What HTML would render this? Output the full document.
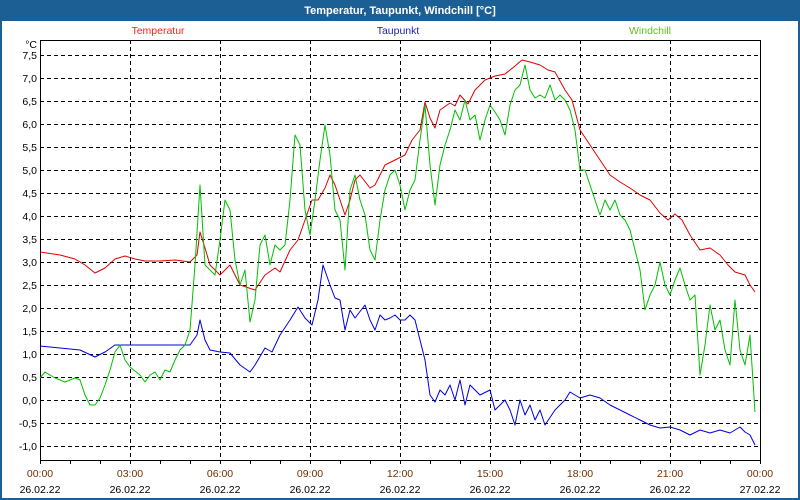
<!DOCTYPE html><html><head><meta charset="utf-8"><style>
html,body{margin:0;padding:0;width:800px;height:500px;overflow:hidden;background:#fff}
svg text{font-family:"Liberation Sans",sans-serif;font-size:10.5px}
</style></head><body>
<svg width="800" height="500" xmlns="http://www.w3.org/2000/svg">
<rect x="0" y="0" width="800" height="500" fill="#1c5f94"/>
<rect x="2" y="21" width="796" height="477" fill="#fff"/>
<text x="400" y="14" fill="#fff" font-weight="bold" text-anchor="middle" style="font-size:11px">Temperatur, Taupunkt, Windchill [°C]</text>
<text x="158" y="34" fill="#ff2020" text-anchor="middle">Temperatur</text>
<text x="398" y="34" fill="#2020c0" text-anchor="middle">Taupunkt</text>
<text x="650" y="34" fill="#60c020" text-anchor="middle">Windchill</text>
<g stroke="#000" stroke-width="1" stroke-dasharray="4,3" shape-rendering="crispEdges" fill="none">
<path d="M40 55.5H760M40 78.5H760M40 101.5H760M40 124.5H760M40 147.5H760M40 170.5H760M40 193.5H760M40 216.5H760M40 239.5H760M40 262.5H760M40 285.5H760M40 308.5H760M40 331.5H760M40 354.5H760M40 377.5H760M40 400.5H760M40 423.5H760M40 446.5H760"/>
<path d="M130.5 40V460M220.5 40V460M310.5 40V460M400.5 40V460M490.5 40V460M580.5 40V460M670.5 40V460"/>
</g>
<rect x="40.5" y="40.5" width="720" height="420" fill="none" stroke="#000" shape-rendering="crispEdges"/>
<path stroke="#000" shape-rendering="crispEdges" d="M70.5 460v4M100.5 460v4M130.5 460v4M160.5 460v4M190.5 460v4M220.5 460v4M250.5 460v4M280.5 460v4M310.5 460v4M340.5 460v4M370.5 460v4M400.5 460v4M430.5 460v4M460.5 460v4M490.5 460v4M520.5 460v4M550.5 460v4M580.5 460v4M610.5 460v4M640.5 460v4M670.5 460v4M700.5 460v4M730.5 460v4M40.5 460v4M760.5 460v4"/>
<g fill="#000" text-anchor="end">
<text x="37" y="48">°C</text>
<text x="37" y="59">7,5</text><text x="37" y="82">7,0</text><text x="37" y="105">6,5</text><text x="37" y="128">6,0</text><text x="37" y="151">5,5</text><text x="37" y="174">5,0</text><text x="37" y="197">4,5</text><text x="37" y="220">4,0</text><text x="37" y="243">3,5</text><text x="37" y="266">3,0</text><text x="37" y="289">2,5</text><text x="37" y="312">2,0</text><text x="37" y="335">1,5</text><text x="37" y="358">1,0</text><text x="37" y="381">0,5</text><text x="37" y="404">0,0</text><text x="37" y="427">-0,5</text><text x="37" y="450">-1,0</text>
</g>
<g fill="#703000" text-anchor="middle">
<text x="40" y="477">00:00</text><text x="130" y="477">03:00</text><text x="220" y="477">06:00</text><text x="310" y="477">09:00</text><text x="400" y="477">12:00</text><text x="490" y="477">15:00</text><text x="580" y="477">18:00</text><text x="670" y="477">21:00</text><text x="760" y="477">00:00</text>
</g>
<g fill="#000" text-anchor="middle">
<text x="40" y="493">26.02.22</text><text x="130" y="493">26.02.22</text><text x="220" y="493">26.02.22</text><text x="310" y="493">26.02.22</text><text x="400" y="493">26.02.22</text><text x="490" y="493">26.02.22</text><text x="580" y="493">26.02.22</text><text x="670" y="493">26.02.22</text><text x="760" y="493">27.02.22</text>
</g>
<g fill="none" stroke-width="1" stroke-linejoin="round">
<polyline stroke="#e00000" points="40,252 60,255 75,259 85,265 95,273 105,268 115,259 125,256 135,259 145,261 160,261 175,260 190,262 197,255 200,232 205,248 210,265 220,275 230,265 240,285 255,290 265,275 275,268 280,272 290,250 298,240 305,220 312,200 318,200 325,188 330,175 335,185 345,215 350,200 355,180 360,175 370,188 375,185 385,165 395,160 405,155 412,140 420,130 425,102 430,118 435,128 440,110 450,103 455,106 460,95 468,104 475,90 485,80 495,76 505,74 515,66 522,60 530,62 540,65 548,70 555,72 565,90 572,100 580,130 590,145 600,160 610,175 620,182 630,188 640,195 650,200 660,213 668,220 675,214 682,220 690,235 700,250 710,248 720,255 728,265 735,272 745,275 750,285 755,292"/>
<polyline stroke="#0000e0" points="40,346 60,348 80,350 95,357 105,352 115,345 190,345 197,335 200,320 205,340 210,350 220,352 230,353 240,365 250,372 255,365 265,348 272,352 280,335 290,320 298,307 305,318 312,325 318,300 323,265 330,285 335,298 340,300 345,330 350,310 355,318 365,305 370,320 375,330 380,315 385,320 390,318 395,315 400,320 405,320 410,315 415,320 420,340 425,360 430,395 435,402 440,390 445,395 450,385 455,400 460,380 465,405 470,385 480,395 490,390 495,410 505,400 510,410 515,425 520,400 525,415 530,405 535,420 540,410 545,425 555,410 565,400 570,392 580,398 590,395 600,398 610,405 620,410 630,415 640,420 650,425 660,428 670,427 680,430 690,435 700,430 710,433 720,430 730,433 740,427 745,432 750,435 755,445"/>
<polyline stroke="#00c000" points="40,378 45,372 55,378 65,382 75,378 80,380 85,395 90,405 95,405 100,398 105,385 110,370 115,352 120,345 125,360 130,367 140,375 145,382 150,375 155,372 160,380 165,370 170,372 175,360 180,350 185,345 190,330 195,265 200,185 205,265 210,270 215,275 220,240 225,200 230,210 235,260 240,285 245,270 250,322 255,300 260,245 265,235 270,265 275,245 280,250 285,245 290,200 295,135 300,145 305,210 310,235 315,200 320,160 325,125 330,155 335,210 340,220 345,270 350,190 355,175 360,200 365,215 370,250 375,260 380,220 385,190 390,175 395,170 400,185 405,210 410,190 415,180 420,140 425,105 430,165 435,205 440,165 445,145 450,130 455,110 460,120 465,100 470,120 475,115 480,140 485,120 490,105 495,112 500,120 505,135 510,105 515,90 520,85 525,65 530,90 535,98 540,95 545,98 550,85 555,100 560,95 565,100 570,110 575,130 580,170 585,170 590,185 595,200 600,215 605,200 610,210 615,200 620,215 625,220 630,230 640,270 645,310 650,295 655,285 660,262 665,285 670,295 675,280 680,268 685,285 690,300 695,295 700,375 705,345 710,305 715,330 720,320 725,350 730,365 735,300 740,350 745,365 750,335 755,412"/>
</g>
</svg>
</body></html>
